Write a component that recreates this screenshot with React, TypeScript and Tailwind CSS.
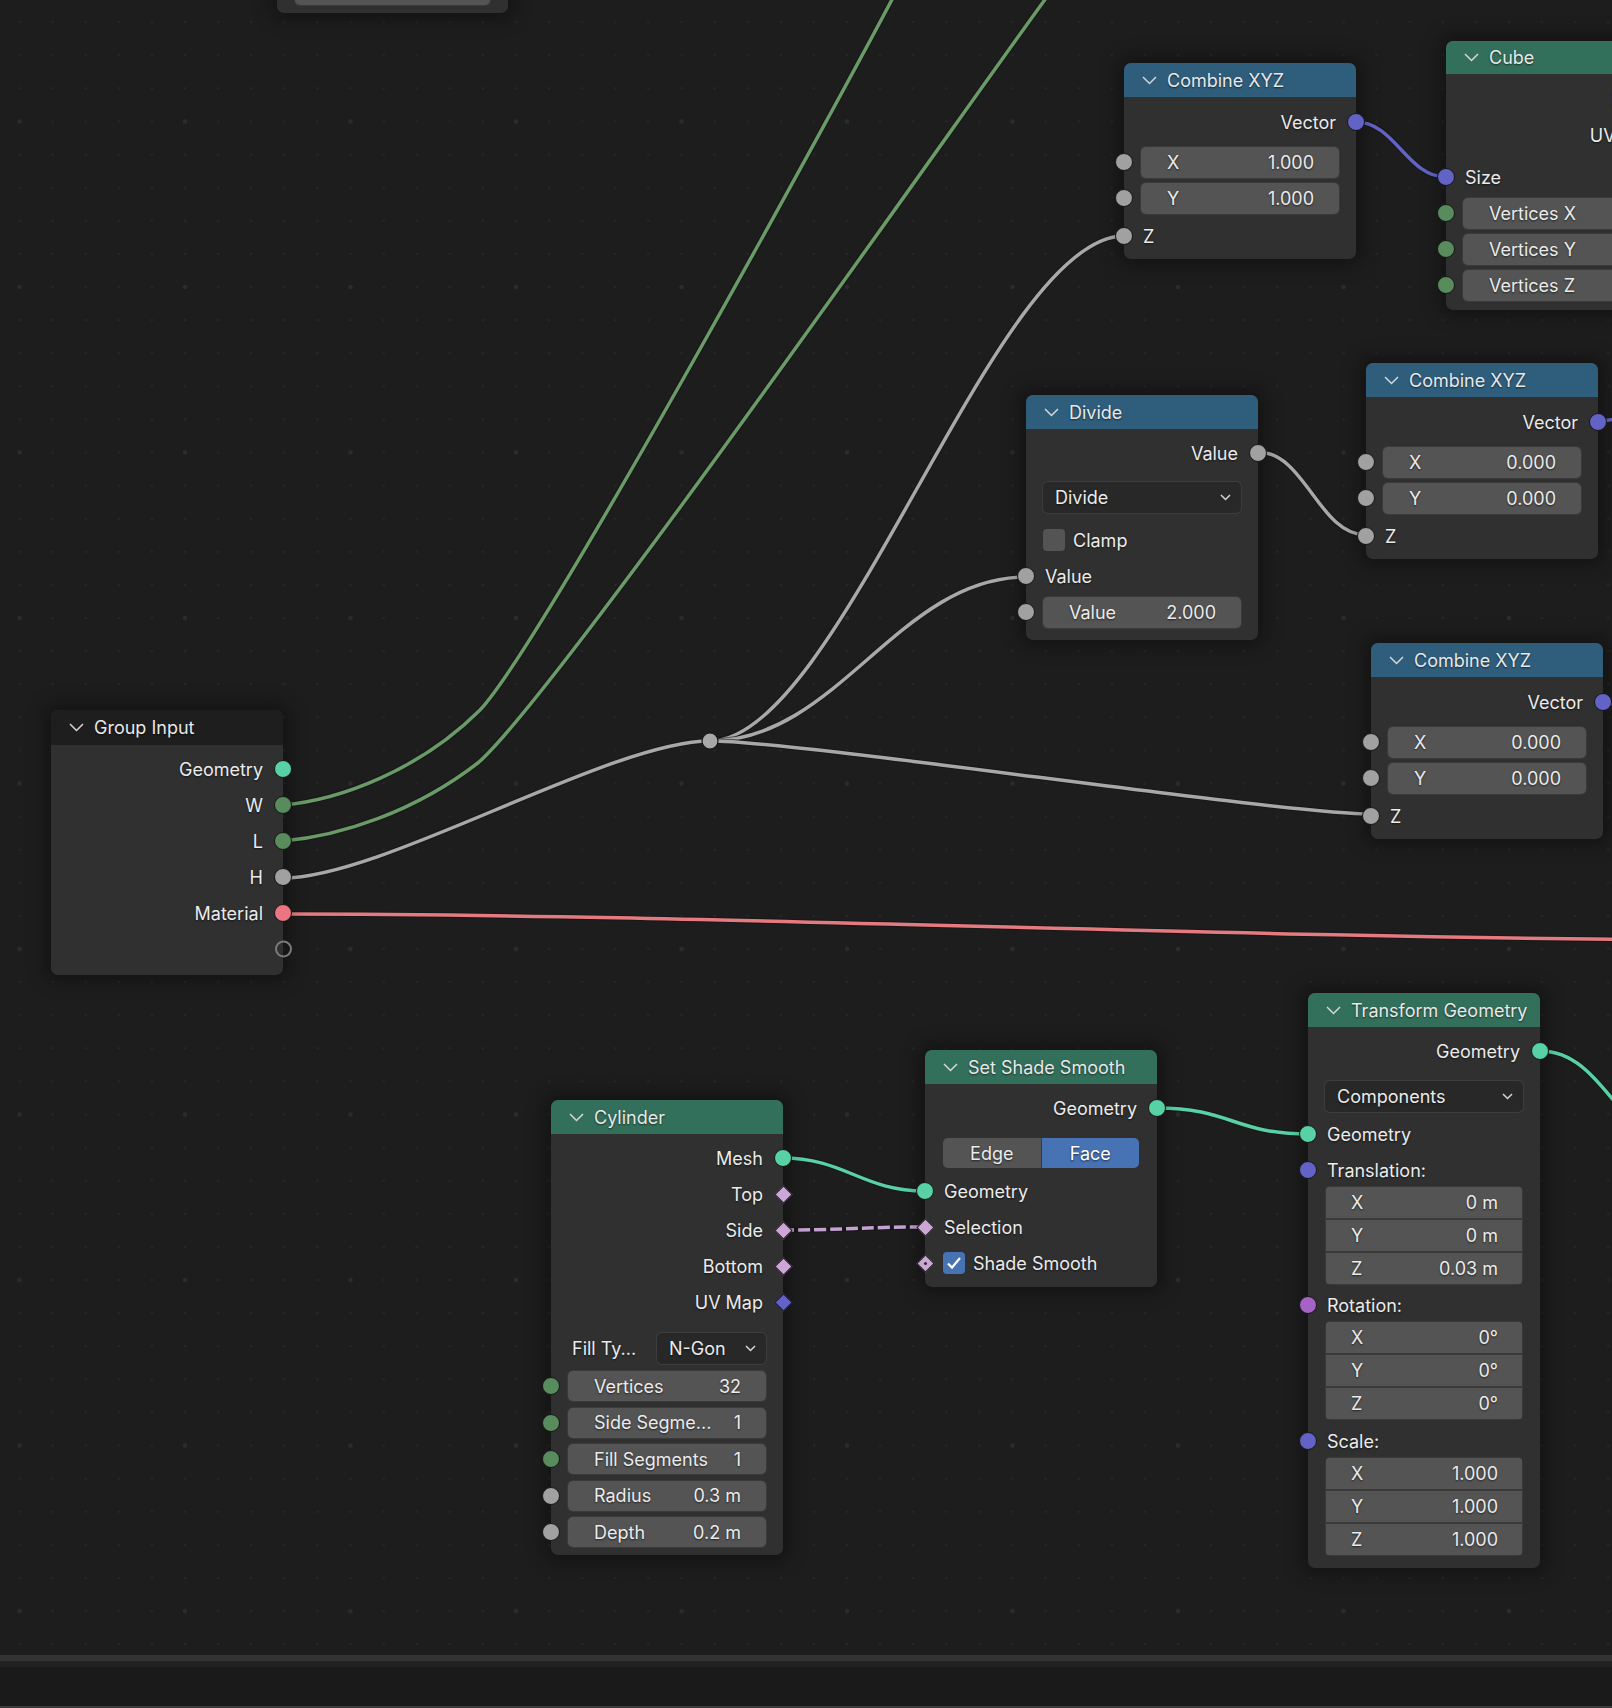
import clsx from 'clsx'
import type { ReactNode } from 'react'

// socket colours (Blender 4 default theme)
const S = {
  geo: 'bg-[#58d1a5]',
  int: 'bg-[#598c5c]',
  flt: 'bg-[#a1a1a1]',
  vec: 'bg-[#6363c7]',
  mat: 'bg-[#eb7582]',
  rot: 'bg-[#a663c7]',
  bool: 'bg-[#cca6d6]',
}

type Shape = 'circle' | 'diamond' | 'dot' | 'hollow'

function Socket({ c, side, shape = 'circle' }: { c?: string; side: 'l' | 'r'; shape?: Shape }) {
  const pos = side === 'l' ? 'left-[-9px]' : 'right-[-9px]'
  if (shape === 'hollow') {
    return <span className={clsx('absolute top-1/2 -translate-y-1/2 w-[17px] h-[17px] rounded-full border-2 border-[#7a7a7a]', pos)} />
  }
  if (shape === 'circle') {
    return <span className={clsx('absolute top-1/2 -translate-y-1/2 w-[18px] h-[18px] rounded-full border-[1.5px] border-[#161616]', pos, c)} />
  }
  return (
    <span className={clsx('absolute top-1/2 -translate-y-1/2 w-[18px] h-[18px] flex items-center justify-center', pos)}>
      <span className={clsx('w-[13px] h-[13px] rotate-45 border border-[#161616] flex items-center justify-center', c)}>
        {shape === 'dot' && <span className="w-[3px] h-[3px] rounded-full bg-[#2b2b2b]" />}
      </span>
    </span>
  )
}

function Chevron({ small }: { small?: boolean }) {
  return small ? (
    <svg width="11" height="7" viewBox="0 0 11 7" className="shrink-0">
      <polyline points="1,1 5.5,5.5 10,1" fill="none" stroke="#d6d6d6" strokeWidth="1.5" />
    </svg>
  ) : (
    <svg width="15" height="9" viewBox="0 0 15 9" className="shrink-0">
      <polyline points="1,1 7.5,7.5 14,1" fill="none" stroke="#d6d6d6" strokeWidth="1.5" />
    </svg>
  )
}

function Node({ pos, head, title, hh = 'h-[34px]', children, body = 'pt-[6px]' }: {
  pos: string; head: string; title: string; hh?: string; children: ReactNode; body?: string
}) {
  return (
    <div className={clsx('absolute w-[232px] rounded-[7px] bg-[#303030] shadow-[0_0_18px_6px_rgba(0,0,0,0.35)]', pos)}>
      <div className={clsx('flex items-center gap-[10px] pl-[18px] rounded-t-[7px]', hh, head)}>
        <Chevron />
        <span className="text-[#e8e8e8]">{title}</span>
      </div>
      <div className={clsx('flex flex-col', body)}>{children}</div>
    </div>
  )
}

function Out({ label, c, shape }: { label: string; c: string; shape?: Shape }) {
  return (
    <div className="relative h-[36px] flex items-center justify-end pr-[20px]">
      <span>{label}</span>
      <Socket c={c} side="r" shape={shape} />
    </div>
  )
}

function In({ label, c, shape, cls }: { label: string; c?: string; shape?: Shape; cls?: string }) {
  return (
    <div className={clsx('relative flex items-center pl-[19px]', cls ?? 'h-[36px]')}>
      <span>{label}</span>
      <Socket c={c} side="l" shape={shape} />
    </div>
  )
}

function Field({ label, value, c, row = 'h-[36px]', box = 'h-[31px]' }: {
  label: string; value: string; c?: string; row?: string; box?: string
}) {
  return (
    <div className={clsx('relative flex items-center px-[17px]', row)}>
      <div className={clsx('flex-1 rounded-[5px] bg-[#545454] ring-1 ring-[#3a3a3a] flex items-center justify-between pl-[26px] pr-[25px] whitespace-nowrap', box)}>
        <span>{label}</span>
        <span>{value}</span>
      </div>
      {c && <Socket c={c} side="l" />}
    </div>
  )
}

function Dropdown({ label, cls }: { label: string; cls?: string }) {
  return (
    <div className={clsx('h-[31px] rounded-[5px] bg-[#282828] ring-1 ring-[#3d3d3d] flex items-center justify-between pl-[12px] pr-[10px]', cls)}>
      <span>{label}</span>
      <Chevron small />
    </div>
  )
}

function VecGroup({ vals }: { vals: string[] }) {
  return (
    <div className="mx-[17px] flex flex-col gap-[2px] p-[1px] rounded-[6px] bg-[#3a3a3a] overflow-hidden">
      {['X', 'Y', 'Z'].map((a, i) => (
        <div key={a} className="h-[31px] bg-[#545454] flex items-center justify-between pl-[25px] pr-[24px]">
          <span>{a}</span>
          <span>{vals[i]}</span>
        </div>
      ))}
    </div>
  )
}

function Check({ on }: { on?: boolean }) {
  return (
    <span className={clsx('w-[22px] h-[22px] rounded-[4px] flex items-center justify-center shrink-0', on ? 'bg-[#4772b3]' : 'bg-[#545454]')}>
      {on && (
        <svg width="16" height="14" viewBox="0 0 16 14">
          <polyline points="2,7.5 6,11.5 14,2" fill="none" stroke="#ffffff" strokeWidth="2.2" />
        </svg>
      )}
    </span>
  )
}

function CombineXYZ({ pos, x, y }: { pos: string; x: string; y: string }) {
  return (
    <Node pos={pos} head="bg-[#2f5e7d]" title="Combine XYZ" body="pt-[7px] pb-[5px]">
      <Out label="Vector" c={S.vec} />
      <div className="mt-[4px]" />
      <Field label="X" value={x} c={S.flt} />
      <Field label="Y" value={y} c={S.flt} />
      <In label="Z" c={S.flt} cls="h-[36px] mt-[2px]" />
    </Node>
  )
}

const LINKS: { d: string; color: string; dash?: string }[] = [
  { d: 'M283,805 C340,800 420,770 480,710 C545,640 850,80 897,-10', color: '#6a9a68' },
  { d: 'M283,841 C340,836 415,812 479,762 C560,690 985,80 1052,-10', color: '#6a9a68' },
  { d: 'M283,878 C383,878 610,741 710,741', color: '#a8a8a8' },
  { d: 'M710,741 C840,741 994,236 1124,236', color: '#a8a8a8' },
  { d: 'M710,741 C837,741 899,577 1026,577', color: '#a8a8a8' },
  { d: 'M710,741 C800,741 1280,814 1371,814', color: '#a8a8a8' },
  { d: 'M1258,452 C1305,452 1319,535 1366,535', color: '#a8a8a8' },
  { d: 'M1356,122 C1395,122 1407,177 1446,177', color: '#6363c7' },
  { d: 'M1597,421 C1608,421 1618,419 1640,414', color: '#6363c7' },
  { d: 'M1603,701 C1614,701 1620,710 1632,728', color: '#6363c7' },
  { d: 'M283,914 C700,914 1200,937 1700,940', color: '#e57a80' },
  { d: 'M782,1158 C845,1158 862,1191 925,1191', color: '#58d1a5' },
  { d: 'M1157,1108 C1230,1108 1235,1134 1308,1134', color: '#58d1a5' },
  { d: 'M1540,1051 C1572,1051 1592,1072 1625,1115', color: '#58d1a5' },
  { d: 'M782,1230 C850,1230 857,1227 925,1227', color: '#c4a3d4', dash: '12 4' },
]

export default function App() {
  return (
    <div className="w-[1612px] h-[1708px] flex flex-col overflow-hidden bg-[#1a1a1a] font-['Inter','Noto_Sans',sans-serif] text-[18px] text-[#ebebeb] [text-shadow:0_1px_2px_rgba(0,0,0,0.6)]">
      <div className="relative h-[1655px] shrink-0 overflow-hidden bg-[#1d1d1d]">
        {/* grid + noodles */}
        <svg className="absolute inset-0" width="1612" height="1655">
          <defs>
            <pattern id="small" x="19.5" y="22.2" width="33.1" height="33.1" patternUnits="userSpaceOnUse">
              <circle cx="0" cy="0" r="1.3" fill="#272727" />
              <circle cx="33.1" cy="0" r="1.3" fill="#272727" />
              <circle cx="0" cy="33.1" r="1.3" fill="#272727" />
              <circle cx="33.1" cy="33.1" r="1.3" fill="#272727" />
            </pattern>
            <pattern id="big" x="19.5" y="121.5" width="165.5" height="165.5" patternUnits="userSpaceOnUse">
              <circle cx="0" cy="0" r="2.2" fill="#2c2c2c" />
              <circle cx="165.5" cy="0" r="2.2" fill="#2c2c2c" />
              <circle cx="0" cy="165.5" r="2.2" fill="#2c2c2c" />
              <circle cx="165.5" cy="165.5" r="2.2" fill="#2c2c2c" />
            </pattern>
          </defs>
          <rect width="1612" height="1655" fill="url(#small)" />
          <rect width="1612" height="1655" fill="url(#big)" />
          {LINKS.map((l, i) => (
            <g key={i}>
              <path d={l.d} fill="none" stroke="#141414" strokeOpacity="0.6" strokeWidth="5.5" />
              <path d={l.d} fill="none" stroke={l.color} strokeWidth="3.5" strokeDasharray={l.dash} />
            </g>
          ))}
          <circle cx="710" cy="741" r="8" fill="#a8a8a8" stroke="#161616" strokeWidth="1.2" />
        </svg>

        {/* node cut off at the top edge */}
        <div className="absolute left-[277px] top-[-40px] w-[231px] h-[53px] rounded-[7px] bg-[#303030] shadow-[0_0_18px_6px_rgba(0,0,0,0.35)] flex flex-col justify-end px-[18px] pb-[8px]">
          <div className="h-[31px] rounded-[5px] bg-[#545454] ring-1 ring-[#3a3a3a]" />
        </div>

        <CombineXYZ pos="left-[1124px] top-[63px]" x="1.000" y="1.000" />
        <CombineXYZ pos="left-[1366px] top-[363px]" x="0.000" y="0.000" />
        <CombineXYZ pos="left-[1371px] top-[643px]" x="0.000" y="0.000" />

        <Node pos="left-[1446px] top-[41px]" head="bg-[#33705c]" title="Cube" hh="h-[33px]" body="pt-[7px] pb-[7px]">
          <Out label="Mesh" c={S.geo} />
          <Out label="UV Map" c={S.vec} shape="diamond" />
          <In label="Size" c={S.vec} cls="h-[36px] mt-[6px]" />
          <Field label="Vertices X" value="2" c={S.int} />
          <Field label="Vertices Y" value="2" c={S.int} />
          <Field label="Vertices Z" value="2" c={S.int} />
        </Node>

        <Node pos="left-[1026px] top-[395px]" head="bg-[#2f5e7d]" title="Divide" body="pt-[6px] pb-[10px]">
          <Out label="Value" c={S.flt} />
          <Dropdown label="Divide" cls="mx-[17px] mt-[11px]" />
          <div className="h-[36px] mt-[9px] flex items-center gap-[8px] pl-[17px]">
            <Check />
            <span>Clamp</span>
          </div>
          <In label="Value" c={S.flt} />
          <Field label="Value" value="2.000" c={S.flt} />
        </Node>

        <Node pos="left-[51px] top-[710px]" head="bg-[#1e1e1e]" title="Group Input" hh="h-[35px]" body="pt-[6px] pb-[8px]">
          <Out label="Geometry" c={S.geo} />
          <Out label="W" c={S.int} />
          <Out label="L" c={S.int} />
          <Out label="H" c={S.flt} />
          <Out label="Material" c={S.mat} />
          <Out label="" c="" shape="hollow" />
        </Node>

        <Node pos="left-[551px] top-[1100px]" head="bg-[#33705c]" title="Cylinder" body="pt-[6px] pb-[4px]">
          <Out label="Mesh" c={S.geo} />
          <Out label="Top" c={S.bool} shape="diamond" />
          <Out label="Side" c={S.bool} shape="diamond" />
          <Out label="Bottom" c={S.bool} shape="diamond" />
          <Out label="UV Map" c={S.vec} shape="diamond" />
          <div className="h-[30px] mt-[13px] flex items-center pl-[21px] pr-[17px]">
            <span>Fill Ty...</span>
            <Dropdown label="N-Gon" cls="ml-auto w-[109px] h-[30px]" />
          </div>
          <div className="mt-[5px]" />
          <Field label="Vertices" value="32" c={S.int} row="h-[36.5px]" box="h-[30px]" />
          <Field label="Side Segme..." value="1" c={S.int} row="h-[36.5px]" box="h-[30px]" />
          <Field label="Fill Segments" value="1" c={S.int} row="h-[36.5px]" box="h-[30px]" />
          <Field label="Radius" value="0.3 m" c={S.flt} row="h-[36.5px]" box="h-[30px]" />
          <Field label="Depth" value="0.2 m" c={S.flt} row="h-[36.5px]" box="h-[30px]" />
        </Node>

        <Node pos="left-[925px] top-[1050px]" head="bg-[#33705c]" title="Set Shade Smooth" body="pt-[6px] pb-[6px]">
          <Out label="Geometry" c={S.geo} />
          <div className="mx-[18px] mt-[12px] h-[30px] flex gap-[1px] rounded-[5px] overflow-hidden bg-[#3a3a3a]">
            <div className="flex-1 bg-[#545454] flex items-center justify-center">Edge</div>
            <div className="flex-1 bg-[#4772b3] flex items-center justify-center text-white">Face</div>
          </div>
          <In label="Geometry" c={S.geo} cls="h-[36px] mt-[5px]" />
          <In label="Selection" c={S.bool} shape="diamond" />
          <div className="relative h-[36px] flex items-center gap-[8px] pl-[18px]">
            <Check on />
            <span>Shade Smooth</span>
            <Socket c={S.bool} side="l" shape="dot" />
          </div>
        </Node>

        <Node pos="left-[1308px] top-[993px]" head="bg-[#33705c]" title="Transform Geometry" body="pt-[6px] pb-[12px]">
          <Out label="Geometry" c={S.geo} />
          <Dropdown label="Components" cls="mx-[17px] mt-[12px]" />
          <In label="Geometry" c={S.geo} cls="h-[36px] mt-[4px]" />
          <In label="Translation:" c={S.vec} cls="h-[32px] mt-[2px]" />
          <VecGroup vals={['0 m', '0 m', '0.03 m']} />
          <In label="Rotation:" c={S.rot} cls="h-[32px] mt-[4px]" />
          <VecGroup vals={['0°', '0°', '0°']} />
          <In label="Scale:" c={S.vec} cls="h-[32px] mt-[5px]" />
          <VecGroup vals={['1.000', '1.000', '1.000']} />
        </Node>
      </div>
      <div className="h-[6px] shrink-0 bg-[#333333]" />
      <div className="h-[6px] shrink-0 bg-[#222222]" />
      <div className="flex-1 bg-[#1a1a1a]" />
      <div className="h-[2px] shrink-0 bg-[#3a3a3a]" />
    </div>
  )
}
